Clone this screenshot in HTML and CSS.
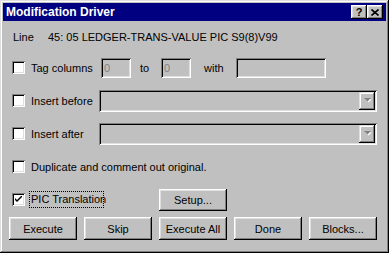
FILE: index.html
```html
<!DOCTYPE html>
<html lang="en">
<head>
    <meta charset="UTF-8">
    <title>Modification Driver</title>
    <link rel="stylesheet" href="styles.css">
</head>
<body>
    <div class="window">
        <div class="titlebar">
            <span class="title">Modification Driver</span>
            <span class="tb-buttons">
                <span class="tb-btn help">?</span>
                <span class="tb-btn">
                    <svg width="8" height="7" viewBox="0 0 8 7"><path d="M0.5 0.5 L7.5 6.5 M7.5 0.5 L0.5 6.5" stroke="#000" stroke-width="1.6" fill="none"/></svg>
                </span>
            </span>
        </div>

        <div class="content">
            <div class="line-row">
                <span class="line-label">Line</span>
                <span>45: 05 LEDGER-TRANS-VALUE PIC S9(8)V99</span>
            </div>

            <div class="row">
                <span class="checkbox"></span>
                <span class="label tag-label">Tag columns</span>
                <span class="field small">0</span>
                <span class="sep to">to</span>
                <span class="field small">0</span>
                <span class="sep with">with</span>
                <span class="field wide"></span>
            </div>

            <div class="row">
                <span class="checkbox"></span>
                <span class="label combo-label">Insert before</span>
                <span class="combo">
                    <span class="drop-btn">
                        <svg width="7" height="5" viewBox="0 0 7 5"><path d="M1 1 H8 L4.5 4.5 Z" fill="#fff"/><path d="M0 0 H7 L3.5 3.5 Z" fill="#808080"/></svg>
                    </span>
                </span>
            </div>

            <div class="row">
                <span class="checkbox"></span>
                <span class="label combo-label">Insert after</span>
                <span class="combo">
                    <span class="drop-btn">
                        <svg width="7" height="5" viewBox="0 0 7 5"><path d="M1 1 H8 L4.5 4.5 Z" fill="#fff"/><path d="M0 0 H7 L3.5 3.5 Z" fill="#808080"/></svg>
                    </span>
                </span>
            </div>

            <div class="row">
                <span class="checkbox"></span>
                <span class="label">Duplicate and comment out original.</span>
            </div>

            <div class="row">
                <span class="checkbox checked">
                    <svg width="7" height="7" viewBox="0 0 7 7"><path d="M0 2 V4 L2 6 L7 1 V-1 L2 4 Z" fill="#000"/></svg>
                </span>
                <span class="pic-focus">PIC Translation</span>
                <span class="button setup">Setup...</span>
            </div>

            <div class="button-row">
                <span class="button">Execute</span>
                <span class="button">Skip</span>
                <span class="button">Execute All</span>
                <span class="button">Done</span>
                <span class="button">Blocks...</span>
            </div>
        </div>
    </div>
</body>
</html>
```

FILE: styles.css
```css
body {
    margin: 0;
    padding: 0;
    background: #c0c0c0;
    font-family: "Liberation Sans", Arial, sans-serif;
    font-size: 11px;
    color: #000;
}

.window {
    width: 389px;
    height: 253px;
    box-sizing: border-box;
    padding: 3px;
    background: #c0c0c0;
    box-shadow: inset -1px -1px #000, inset 1px 1px #dfdfdf,
                inset -2px -2px #808080, inset 2px 2px #fff;
}

.titlebar {
    height: 18px;
    background: #000080;
    color: #fff;
    display: flex;
    align-items: center;
    justify-content: space-between;
    padding-left: 3px;
}

.title {
    font-weight: bold;
    font-size: 12px;
}

.tb-buttons {
    display: flex;
    margin-right: 3px;
}

.tb-btn {
    width: 16px;
    height: 14px;
    box-sizing: border-box;
    background: #c0c0c0;
    display: flex;
    align-items: center;
    justify-content: center;
    box-shadow: inset -1px -1px #000, inset 1px 1px #fff,
                inset -2px -2px #808080, inset 2px 2px #dfdfdf;
}

.tb-btn.help {
    color: #000;
    font-weight: bold;
    font-size: 11px;
    line-height: 14px;
}

.content {
    padding: 0 6px;
}

.line-row {
    height: 20px;
    margin-top: 6px;
    margin-bottom: 4px;
    display: flex;
    align-items: center;
    padding-left: 4px;
}

.line-label {
    width: 35px;
}

.row {
    height: 33px;
    display: flex;
    align-items: center;
    padding-left: 3px;
    white-space: nowrap;
}

.checkbox {
    width: 13px;
    height: 13px;
    box-sizing: border-box;
    background: #fff;
    display: flex;
    align-items: center;
    justify-content: center;
    box-shadow: inset 1px 1px #808080, inset -1px -1px #fff,
                inset 2px 2px #000, inset -2px -2px #dfdfdf;
}

.label {
    margin-left: 6px;
}

.tag-label {
    width: 70px;
}

.combo-label {
    width: 68px;
}

.field {
    height: 20px;
    box-sizing: border-box;
    background: #c0c0c0;
    color: #808080;
    padding: 0 3px;
    line-height: 20px;
    box-shadow: inset 1px 1px #808080, inset -1px -1px #fff,
                inset 2px 2px #000, inset -2px -2px #dfdfdf;
}

.field.small {
    width: 30px;
}

.field.wide {
    width: 90px;
}

.sep.to {
    margin-left: 9px;
    width: 21px;
}

.sep.with {
    margin-left: 13px;
    width: 32px;
}

.combo {
    width: 278px;
    height: 22px;
    box-sizing: border-box;
    background: #c0c0c0;
    display: flex;
    justify-content: flex-end;
    align-items: center;
    padding-right: 2px;
    box-shadow: inset 1px 1px #808080, inset -1px -1px #fff,
                inset 2px 2px #000, inset -2px -2px #dfdfdf;
}

.drop-btn {
    width: 16px;
    height: 18px;
    box-sizing: border-box;
    display: flex;
    align-items: center;
    justify-content: center;
    box-shadow: inset -1px -1px #000, inset 1px 1px #dfdfdf,
                inset -2px -2px #808080, inset 2px 2px #fff;
}

.pic-focus {
    margin-left: 4px;
    width: 75px;
    box-sizing: border-box;
    padding: 1px 1px;
    border: 1px dotted #000;
    line-height: 13px;
}

.button {
    width: 68px;
    height: 23px;
    box-sizing: border-box;
    display: flex;
    align-items: center;
    justify-content: center;
    background: #c0c0c0;
    box-shadow: inset -1px -1px #000, inset 1px 1px #fff,
                inset -2px -2px #808080, inset 2px 2px #dfdfdf;
}

.button.setup {
    height: 22px;
    margin-left: 55px;
}

.button-row {
    display: flex;
    gap: 7px;
    margin-top: 1px;
}
```
